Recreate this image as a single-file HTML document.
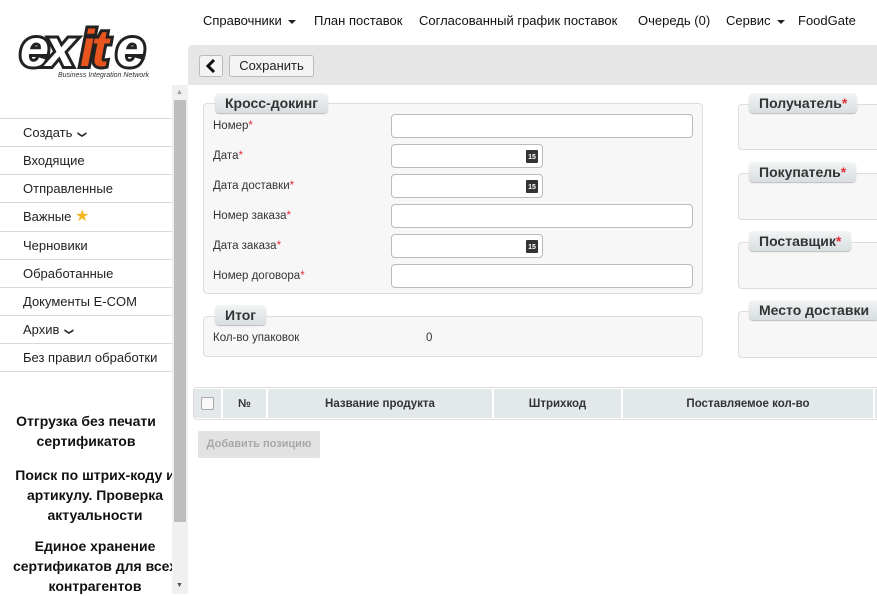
<!DOCTYPE html>
<html><head><meta charset="utf-8"><style>
*{box-sizing:border-box;margin:0;padding:0}
body{width:877px;height:594px;overflow:hidden;background:#fff;font-family:"Liberation Sans","DejaVu Sans",sans-serif;font-size:13px;color:#222;position:relative}
.a{position:absolute}
.nav{top:13px;font-size:13px;color:#111;white-space:nowrap}
.caret{display:inline-block;border-left:4px solid transparent;border-right:4px solid transparent;border-top:4px solid #222;vertical-align:middle;margin-left:3px}
.mi{left:0;width:172px;height:28px;border-top:1px solid #d8d8d8;padding-left:23px;line-height:27px;font-size:13px}
.dn{display:inline-block;transform:rotate(90deg);font-size:9px;font-weight:bold;margin-left:2px}
.promo{left:0;width:172px;text-align:center;font-weight:bold;font-size:14px;line-height:20px;color:#111;overflow:hidden;white-space:nowrap}
.fs{border:1px solid #ddd;border-radius:4px;background:#f7f7f7}
.lg{height:20px;background:linear-gradient(#f2f4f5,#d8dee1);border-radius:4px;font-weight:bold;font-size:14px;line-height:20px;padding:0 10px;color:#333;box-shadow:0 1px 1px #bbb}
.lb{left:213px;font-size:11.5px;color:#333}
.lb i{color:#e0303a;font-style:normal}
.in{left:391px;height:24px;border:1px solid #bbb;border-radius:4px;background:#fff}
.cal{position:absolute;right:4px;top:5px;width:12px;height:13px;background:#333;border-radius:1px;color:#fff;font-size:7px;line-height:10px;text-align:center;font-weight:bold;padding-top:3px}
.th{top:389px;height:29px;background:#e3e8ea;font-weight:bold;font-size:11.5px;line-height:31px;text-align:center;color:#333;border-right:2px solid #fff}
.r{color:#e0303a}
</style></head><body>
<div class="a" style="left:18px;top:18px;width:145px;height:64px">
<svg width="145" height="64" viewBox="0 0 145 64">
<text x="2" y="48" font-family="Liberation Sans" font-weight="bold" font-style="italic" font-size="52" fill="#fff" stroke="#222" stroke-width="6" paint-order="stroke" letter-spacing="-3">ex</text>
<text x="62" y="48" font-family="Liberation Sans" font-weight="bold" font-style="italic" font-size="52" fill="#e8541e" stroke="#222" stroke-width="6" paint-order="stroke" letter-spacing="-3">it</text>
<text x="98" y="48" font-family="Liberation Sans" font-weight="bold" font-style="italic" font-size="52" fill="#fff" stroke="#222" stroke-width="6" paint-order="stroke">e</text>
<text x="40" y="59" font-family="Liberation Sans" font-style="italic" font-size="7" fill="#333">Business Integration Network</text>
</svg></div>
<div class="a nav" style="left:203px">Справочники <span class="caret"></span></div>
<div class="a nav" style="left:314px">План поставок</div>
<div class="a nav" style="left:419px">Согласованный график поставок</div>
<div class="a nav" style="left:638px">Очередь (0)</div>
<div class="a nav" style="left:726px">Сервис <span class="caret"></span></div>
<div class="a nav" style="left:798px">FoodGate</div>
<div class="a" style="left:188px;top:45px;width:689px;height:40px;background:#e6e6e6;border-radius:4px 0 0 0"></div>
<div class="a" style="left:199px;top:55px;width:24px;height:22px;background:#f4f4f4;border:1px solid #bbb;border-radius:3px;text-align:center">
<svg width="12" height="14" viewBox="0 0 12 14" style="margin-top:3px"><path d="M9 1L3 7l6 6" stroke="#111" stroke-width="3" fill="none"/></svg></div>
<div class="a" style="left:229px;top:55px;width:85px;height:22px;background:#f4f4f4;border:1px solid #bbb;border-radius:3px;text-align:center;line-height:20px;font-size:13px">Сохранить</div>
<div class="a mi" style="top:118px">Создать <span class="dn">&#10095;</span></div>
<div class="a mi" style="top:146px">Входящие</div>
<div class="a mi" style="top:174px">Отправленные</div>
<div class="a mi" style="top:202px">Важные <span style="color:#f5b820;font-size:16px">★</span></div>
<div class="a mi" style="top:231px">Черновики</div>
<div class="a mi" style="top:259px">Обработанные</div>
<div class="a mi" style="top:287px">Документы E-COM</div>
<div class="a mi" style="top:315px">Архив <span class="dn">&#10095;</span></div>
<div class="a mi" style="top:343px">Без правил обработки</div>
<div class="a" style="left:0;top:371px;width:172px;border-top:1px solid #d8d8d8"></div>
<div class="a promo" style="top:411px">Отгрузка без печати<br>сертификатов</div>
<div class="a promo" style="top:465px;left:0;width:172px"><div style="width:190px;text-align:center">Поиск по штрих-коду и<br>артикулу. Проверка<br>актуальности</div></div>
<div class="a promo" style="top:536px"><div style="width:190px;text-align:center">Единое хранение<br>сертификатов для всех<br>контрагентов</div></div>
<div class="a" style="left:172px;top:85px;width:16px;height:509px;background:#f0f0f0"></div>
<div class="a" style="left:174px;top:100px;width:12px;height:422px;background:#bdbdbd"></div>
<div class="a" style="left:176px;top:89px;font-size:7px;color:#999">▲</div>
<div class="a" style="left:176px;top:582px;font-size:7px;color:#555">▼</div>
<div class="a fs" style="left:203px;top:103px;width:500px;height:191px"></div>
<div class="a lg" style="left:215px;top:93px">Кросс-докинг</div>
<div class="a lb" style="top:120px">Номер<i>*</i></div>
<div class="a lb" style="top:150px">Дата<i>*</i></div>
<div class="a lb" style="top:180px">Дата доставки<i>*</i></div>
<div class="a lb" style="top:210px">Номер заказа<i>*</i></div>
<div class="a lb" style="top:240px">Дата заказа<i>*</i></div>
<div class="a lb" style="top:270px">Номер договора<i>*</i></div>
<div class="a in" style="top:114px;width:302px"></div>
<div class="a in" style="top:144px;width:152px"><div class="cal">15</div></div>
<div class="a in" style="top:174px;width:152px"><div class="cal">15</div></div>
<div class="a in" style="top:204px;width:302px"></div>
<div class="a in" style="top:234px;width:152px"><div class="cal">15</div></div>
<div class="a in" style="top:264px;width:302px"></div>
<div class="a fs" style="left:203px;top:316px;width:500px;height:41px"></div>
<div class="a lg" style="left:215px;top:305px">Итог</div>
<div class="a lb" style="top:332px">Кол-во упаковок</div>
<div class="a lb" style="left:426px;top:332px">0</div>
<div class="a fs" style="left:738px;top:104px;width:150px;height:46px"></div>
<div class="a lg" style="left:749px;top:93px">Получатель<span class="r">*</span></div>
<div class="a fs" style="left:738px;top:173px;width:150px;height:47px"></div>
<div class="a lg" style="left:749px;top:162px">Покупатель<span class="r">*</span></div>
<div class="a fs" style="left:738px;top:242px;width:150px;height:47px"></div>
<div class="a lg" style="left:749px;top:231px">Поставщик<span class="r">*</span></div>
<div class="a fs" style="left:738px;top:311px;width:150px;height:47px"></div>
<div class="a lg" style="left:749px;top:300px;white-space:nowrap">Место доставки</div>
<div class="a" style="left:193px;top:387px;width:690px;height:33px;border:1px solid #ddd;border-radius:4px"></div>
<div class="a th" style="left:194px;width:29px"><div style="width:13px;height:13px;border:1px solid #aaa;border-radius:2px;background:#f8f8f8;margin:8px auto"></div></div>
<div class="a th" style="left:223px;width:45px">№</div>
<div class="a th" style="left:268px;width:226px">Название продукта</div>
<div class="a th" style="left:494px;width:129px">Штрихкод</div>
<div class="a th" style="left:623px;width:252px">Поставляемое кол-во</div>
<div class="a th" style="left:875px;width:4px"></div>
<div class="a" style="left:198px;top:431px;width:122px;height:27px;background:#e2e2e2;border-radius:2px;color:#a8a8a8;font-weight:bold;font-size:11px;line-height:27px;text-align:center">Добавить позицию</div>
</body></html>
